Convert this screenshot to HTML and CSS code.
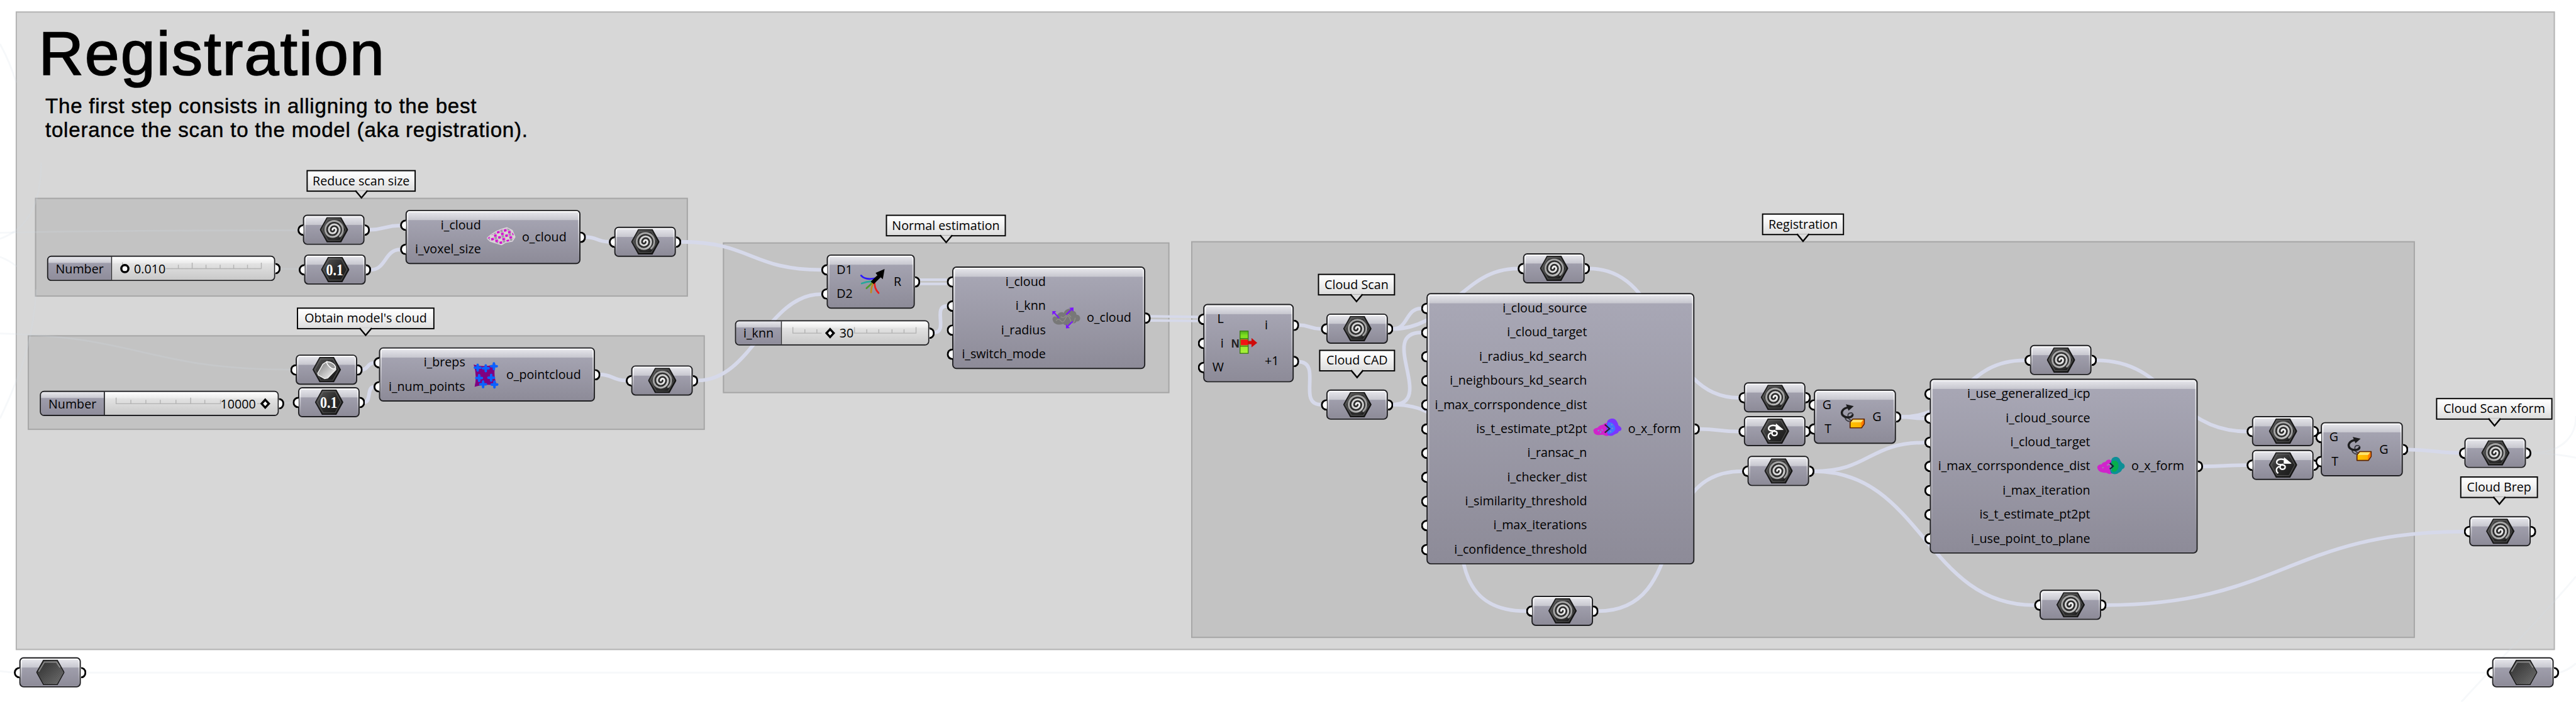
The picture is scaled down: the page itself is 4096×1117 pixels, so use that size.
FILE: index.html
```html
<!DOCTYPE html>
<html lang="en">
<head>
<meta charset="utf-8">
<title>Registration</title>
<link rel="stylesheet" href="styles.css">
</head>
<body>
<svg class="defs" aria-hidden="true">
  <defs>
    <linearGradient id="hexfill" x1="0" y1="0" x2="1" y2="1"><stop offset="0" stop-color="#5c5c5c"/><stop offset=".5" stop-color="#2c2c2c"/><stop offset="1" stop-color="#151515"/></linearGradient>
    <linearGradient id="meshfill" x1="0" y1="0" x2="1" y2="1"><stop offset="0" stop-color="#2e2e2e"/><stop offset="1" stop-color="#8a8a8a"/></linearGradient>
    <radialGradient id="spiralfill" gradientUnits="userSpaceOnUse" cx="23.5" cy="20.5" r="17"><stop offset="0" stop-color="#fff"/><stop offset=".55" stop-color="#cfcfcf"/><stop offset="1" stop-color="#8c8c8c"/></radialGradient>
    <linearGradient id="brepfill" x1="0" y1="0" x2="1" y2="1"><stop offset="0" stop-color="#777"/><stop offset="1" stop-color="#fff"/></linearGradient>
    <linearGradient id="boxfill" x1="0" y1="0" x2="1" y2="0"><stop offset="0" stop-color="#ffc400"/><stop offset=".75" stop-color="#ffb000"/><stop offset="1" stop-color="#ff6a00"/></linearGradient>
    <linearGradient id="listfill" x1="0" y1="0" x2="0" y2="1"><stop offset="0" stop-color="#4fae1c"/><stop offset=".2" stop-color="#7fe01f"/><stop offset="1" stop-color="#a8f23a"/></linearGradient>
    <pattern id="voxels" width="12" height="9" patternUnits="userSpaceOnUse" patternTransform="rotate(-14)">
      <rect width="12" height="9" fill="#d6d6d0"/><rect width="4.500" height="4" fill="#d411d0"/><rect x="6" y="4.5" width="4.500" height="4" fill="#d411d0"/><rect x="6" y="0" width="4" height="3.500" fill="#9f9ba6"/>
    </pattern>
    <pattern id="dots" width="3" height="3" patternUnits="userSpaceOnUse"><path d="M0 0h1.500v1.500H0zM1.500 1.500H3V3H1.500z" fill="#222" fill-opacity=".5"/></pattern>
  </defs>
  <symbol id="hex" viewBox="0 0 47 42">
    <path d="M12 .7H35L46.300 21 35 41.300H12L.7 21z" fill="url(#hexfill)" stroke="#111" stroke-width="1.400"/>
    <path d="M13.500 3.500H33.500L43 21 33.500 38.500H13.500L4 21z" fill="none" stroke="#777" stroke-opacity=".55" stroke-width="1.200"/>
  </symbol>
  <symbol id="spiral" viewBox="0 0 47 42">
    <use href="#hex"/>
    <circle cx="23.500" cy="20.500" r="16.500" fill="#2d2d2d"/>
    <path d="M21 21a3 3 0 0 1 6 0a6 6 0 0 1-12 0a9 9 0 0 1 18 0a12 12 0 0 1-24 0a14.700 14.700 0 0 1 29.400 0a15 15 0 0 1-5 11" fill="none" stroke="url(#spiralfill)" stroke-width="3.100" stroke-linecap="round"/>
  </symbol>
  <symbol id="brep" viewBox="0 0 47 42">
    <use href="#hex"/>
    <path d="M8.500 27L17 12 24 7.500 38 16 38.500 21 25 35 20 36 9.500 30z" fill="url(#brepfill)" stroke="#eee" stroke-width="1.500"/>
    <path d="M23 8.500C29 7 37 11 38 17C37 24 26 17 23 8.500z" fill="#9a9a9a" stroke="#fff" stroke-width="1.500"/>
  </symbol>
  <symbol id="xform" viewBox="0 0 47 42">
    <use href="#hex"/>
    <path d="M28 13C19 9.500 12.500 12 13 17.500C14 23 27 18.500 27 24C27 29.500 18.500 29.500 18.500 25C18.500 22 21 20 24 20M17.500 23.500C11.500 26 11 31 15.500 35" fill="none" stroke="#fff" stroke-width="2.500"/>
    <path d="M25.500 9L37 18.500 25 18.500z" fill="#fff" stroke="#fff"/>
  </symbol>
  <symbol id="mesh" viewBox="0 0 47 42">
    <path d="M12 .7H35L46.300 21 35 41.300H12L.7 21z" fill="url(#meshfill)" stroke="#151515" stroke-width="1.400"/>
    <path d="M12 .7H35L46.300 21 35 41.300H12L.7 21z" fill="url(#dots)"/>
    <path d="M4 20L13.500 4H33.500l6 9" fill="none" stroke="#a5a5a5" stroke-opacity=".7" stroke-width="2"/>
  </symbol>
  <symbol id="voxel" viewBox="0 0 48 48">
    <path d="M0 26L7 20 15 15 24 11 33 8.500 42 13 46.500 24 42 31 31 33 24 37 14 34 5 31z" fill="url(#voxels)" stroke="#d9d4da" stroke-width="1.500" stroke-linejoin="round"/>
  </symbol>
  <symbol id="pointcloud" viewBox="0 0 48 48">
    <path d="M4 7.500Q20 13 40 7Q36 25 42.500 42.500Q24 39 5.500 44.500Q10 26 4 7.500z" fill="#800080"/>
    <path d="M6 12.700h9.200M10.600 8v9.400M19.400 13.700h9.200M24 9v9.400M33 10.300h9.200M37.500 5.600v9.400M8.400 30h9.200M13 25.300v9.400M28.400 29.300h9.200M33 24.600v9.400M15 40.300h9.200M19.600 35.600v9.400M33.800 40.700h9.200M38.400 36v9.400" stroke="#0b62ff" stroke-width="4.200" stroke-linecap="round"/>
  </symbol>
  <symbol id="merge" viewBox="0 0 48 48">
    <g fill="none" stroke-width="2.800" stroke-linecap="round">
      <path d="M4 14Q11 22 27 18.500" stroke="#2a18ff"/><path d="M5 27Q13 24 22 23.500" stroke="#27a79b"/><path d="M13 35Q18 31 23 25" stroke="#4e9c2b"/><path d="M20.500 42Q20.500 34 24 26" stroke="#bf8a1d"/><path d="M33 43Q25 35 26.500 22" stroke="#ee1c1c"/>
    </g>
    <path d="M20 24L31 13.500 28 9.500 43 3 40 20 36.500 17 25 28z" fill="#000"/>
  </symbol>
  <symbol id="normals" viewBox="0 0 48 48">
    <path d="M2 29C-1 22 6 20 8 23C9 15 17 13 20 16C22 9 33 6 36 13C40 13 41 18 41 19C49 19 49 31 41 30C38 35 33 33 31 33C28 39 20 36 19 34C12 37 4 35 2 29z" fill="#787878"/>
    <path d="M7 29q4-5 8 0t8-4 8 3 8-4M15 22q4 4 8-1t9 2" fill="none" stroke="#a09c94" stroke-opacity=".6" stroke-width="1.600"/>
    <path d="M12 24.500L3.500 15M24 19L34 8.500M34.500 30L25.500 39" stroke="#7a14ff" stroke-width="2.200"/>
    <path d="M1 13h6.500L1 19.500zM36 7v7L29 7.500zM23.500 41.500v-7l6.500 6.500z" fill="#7a14ff"/>
  </symbol>
  <symbol id="list" viewBox="0 0 48 48">
    <rect x="17" y="4" width="13.500" height="37" fill="url(#listfill)" stroke="#3c7a17" stroke-width="1.400"/>
    <path d="M17 16.500h13.500M17 29h13.500" stroke="#3c7a17" stroke-width="1.400"/>
    <rect x="18" y="18" width="12" height="9.500" fill="#f01414"/>
    <path d="M30 20.500h6V15.500L45.500 23.500 36 31V26h-6z" fill="#cf0a0a"/>
  </symbol>
  <symbol id="ransac" viewBox="0 0 48 48">
    <path d="M1 29C-1 24 5 23 8 22C11 17 16 18 17 17C20 13 25 14 26 17V35C22 38 18 34 16 34C9 35 2 35 1 29z" fill="#d024cb"/>
    <path d="M23 14C24 6 37 4 40 13C42 15 41 18 43 19C49 22 48 28 43 28C41 33 37 32 35 34C31 37 26 36 24 34L22 25z" fill="#7a36ff"/>
    <path d="M24 14Q31 12 35 18T35 28Q29 34 24 32z" fill="#3f74ff"/>
    <path d="M8 28l2-2M14 25l2 2M12 31l1-3M30 17l2 1M31 23l2 1M28 29l2-1" stroke="#7d8cc8" stroke-width="2"/>
    <path d="M19.500 17L27.500 24 19.500 30.500" fill="none" stroke="#25222e" stroke-width="2.200"/>
  </symbol>
  <symbol id="icp" viewBox="0 0 48 48">
    <path d="M2 28C0 23 6 21 9 21C10 17 15 18 16 16C19 11 25 13 26 17V36C21 39 18 35 16 35C10 35 4 34 2 28z" fill="#d024cb"/>
    <path d="M25 15C25 7 38 6 40 15C41 17 42 18 43 19C49 21 48 28 43 29C41 34 39 34 37 35C33 39 26 37 24 35L22 27z" fill="#0d8f96"/>
    <path d="M26 16Q34 13 36 19T35 30Q30 36 26 32z" fill="#06ae4c"/>
    <path d="M18 23q3-4 6 0v7M10 27l2-1" fill="none" stroke="#9d86b0" stroke-width="2"/>
    <path d="M22.500 19L28 24 22.500 29" fill="none" stroke="#123" stroke-width="2.200"/>
  </symbol>
  <symbol id="transform" viewBox="0 0 48 48">
    <path d="M26 21C25 16 17 17 17.500 22.500C17.500 28 20 30 25 31M14 23C11 28 16 32 21 32" fill="none" stroke="#3a3a42" stroke-width="1.800"/>
    <path d="M19 8.500C8 10 5 17 9 22C14 27 26 26 25 20" fill="none" stroke="#1d1d1f" stroke-width="3.600"/>
    <path d="M14 3.500L27 6.500 18.500 14z" fill="#1d1d1f"/>
    <path d="M21 33.500L25.500 28H44.500V36L40 42.500H21z" fill="url(#boxfill)" stroke="#5e2500" stroke-width="1.800" stroke-linejoin="round"/>
    <path d="M22 33.500L26 29H43L39.500 33.500z" fill="#ffe36b"/>
    <path d="M39.500 34L43.500 29V36L39.500 41.500z" fill="#ff7a00"/>
  </symbol>
</svg>

<main class="canvas">
  <section class="group g-main"></section>
  <section class="group inner g-reduce"></section>
  <section class="group inner g-obtain"></section>
  <section class="group inner g-normal"></section>
  <section class="group inner g-reg"></section>

  <svg class="wires" viewBox="0 0 4269 1164">
    <g class="faint">
      <path d="M0 386C160 382 330 382 493 382"/>
      <path d="M0 553C230 558 250 613 481 613"/>
      <path d="M0 73Q16 102 27 137"/>
      <path d="M0 396C45 380 68 340 68 270"/>
      <path d="M0 426Q16 432 28 442"/>
      <path d="M0 694C35 620 56 560 60 480"/>
      <path d="M464 446H495M470 669L485 667"/>
      <path d="M0 1113L22 1115.500M142 1115.500H4121"/>
      <path d="M4194 751C4250 751 4269 720 4269 690M4194 751Q4235 752 4269 759"/>
      <path d="M4079 1164C4160 1075 4215 1020 4269 956M4240 1115.500Q4256 1112 4269 1100"/>
    </g>
    <g class="wire">
      <path d="M612 381C637 381 638 374 663 374"/>
      <path d="M614 447.500C640 447.500 637 414 663 414"/>
      <path d="M970 393C990 393 989 401 1009 401"/>
      <path d="M1128 401C1245 401 1244 447.500 1361 447.500"/>
      <path d="M600 613C610 613 609 602 619 602"/>
      <path d="M604 667C615 667 608 642 619 642"/>
      <path d="M994 621C1015 621 1016 631 1037 631"/>
      <path d="M1156 631C1247 631 1270 488 1361 488"/>
      <path d="M1548 551.500C1572 551.500 1545 507.500 1569 507.500"/>
      <path d="M2152 539C2170 539 2171 545.500 2189 545.500"/>
      <path d="M2152 600C2192 600 2149 671 2189 671"/>
      <path d="M2308 545.500C2334 545.500 2329 511.500 2355 511.500"/>
      <path d="M2308 545.500C2400 545.500 2423 445.500 2515 445.500"/>
      <path d="M2308 671C2380 671 2283 551.500 2355 551.500"/>
      <path d="M2308 671C2521 671 2314 1013.500 2529 1013.500"/>
      <path d="M2648 1013.500C2807 1013.500 2728 781.500 2887 781.500"/>
      <path d="M2634 445.500C2766 445.500 2749 659.500 2881 659.500"/>
      <path d="M2816 711.500C2848 711.500 2849 715.500 2881 715.500"/>
      <path d="M3150 691.500C3170 691.500 3169 694 3189 694"/>
      <path d="M3150 691.500C3252 691.500 3253 597.500 3355 597.500"/>
      <path d="M3006 781.500C3098 781.500 3097 734 3189 734"/>
      <path d="M3006 781.500C3185 781.500 3192 1003.500 3371 1003.500"/>
      <path d="M3474 597.500C3598 597.500 3599 715.500 3723 715.500"/>
      <path d="M3650 773.500C3686 773.500 3687 771.500 3723 771.500"/>
      <path d="M3990 745.500C4032 745.500 4033 751 4075 751"/>
      <path d="M3490 1003.500C3775 1003.500 3798 881.500 4083 881.500"/>
    </g>
    <g class="wire double">
      <path d="M1524 463.800H1569M1524 470.800H1569"/>
      <path d="M1906 524.500C1945 524.500 1946 525.500 1985 525.500M1906 531.500C1945 531.500 1946 532.500 1985 532.500"/>
    </g>
  </svg>

  <h1 class="title">Registration</h1>
  <p class="intro">The first step consists in alligning to the best<br>tolerance the scan to the model (aka registration).</p>

  <div class="tag t-reduce">Reduce scan size<svg viewBox="0 0 24 14"><path d="M2 0L12 12 22 0"/></svg></div>
  <div class="tag t-obtain">Obtain model's cloud<svg viewBox="0 0 24 14"><path d="M2 0L12 12 22 0"/></svg></div>
  <div class="tag t-normal">Normal estimation<svg viewBox="0 0 24 14"><path d="M2 0L12 12 22 0"/></svg></div>
  <div class="tag t-reg">Registration<svg viewBox="0 0 24 14"><path d="M2 0L12 12 22 0"/></svg></div>
  <div class="tag t-scan">Cloud Scan<svg viewBox="0 0 24 14"><path d="M2 0L12 12 22 0"/></svg></div>
  <div class="tag t-cad">Cloud CAD<svg viewBox="0 0 24 14"><path d="M2 0L12 12 22 0"/></svg></div>
  <div class="tag t-xform">Cloud Scan xform<svg viewBox="0 0 24 14"><path d="M2 0L12 12 22 0"/></svg></div>
  <div class="tag t-brep">Cloud Brep<svg viewBox="0 0 24 14"><path d="M2 0L12 12 22 0"/></svg></div>

  <div class="node param p1"><i class="grip in"></i><svg><use href="#spiral"/></svg><i class="grip out"></i></div>
  <div class="node param p2"><i class="grip in"></i><svg viewBox="0 0 47 42"><use href="#hex"/><text x="8.500" y="30.500" textLength="28.500" lengthAdjust="spacingAndGlyphs" class="hex-number">0.1</text></svg><i class="grip out"></i></div>
  <div class="node param p3"><i class="grip in"></i><svg><use href="#spiral"/></svg><i class="grip out"></i></div>
  <div class="node param p4"><i class="grip in"></i><svg><use href="#brep"/></svg><i class="grip out"></i></div>
  <div class="node param p5"><i class="grip in"></i><svg viewBox="0 0 47 42"><use href="#hex"/><text x="8.500" y="30.500" textLength="28.500" lengthAdjust="spacingAndGlyphs" class="hex-number">0.1</text></svg><i class="grip out"></i></div>
  <div class="node param p6"><i class="grip in"></i><svg><use href="#spiral"/></svg><i class="grip out"></i></div>
  <div class="node param p7"><i class="grip in"></i><svg><use href="#spiral"/></svg><i class="grip out"></i></div>
  <div class="node param p8"><i class="grip in"></i><svg><use href="#spiral"/></svg><i class="grip out"></i></div>
  <div class="node param p9"><i class="grip in"></i><svg><use href="#spiral"/></svg><i class="grip out"></i></div>
  <div class="node param p10"><i class="grip in"></i><svg><use href="#spiral"/></svg><i class="grip out"></i></div>
  <div class="node param p11"><i class="grip in"></i><svg><use href="#spiral"/></svg><i class="grip out"></i></div>
  <div class="node param p12"><i class="grip in"></i><svg><use href="#xform"/></svg><i class="grip out"></i></div>
  <div class="node param p13"><i class="grip in"></i><svg><use href="#spiral"/></svg><i class="grip out"></i></div>
  <div class="node param p14"><i class="grip in"></i><svg><use href="#spiral"/></svg><i class="grip out"></i></div>
  <div class="node param p15"><i class="grip in"></i><svg><use href="#spiral"/></svg><i class="grip out"></i></div>
  <div class="node param p16"><i class="grip in"></i><svg><use href="#spiral"/></svg><i class="grip out"></i></div>
  <div class="node param p17"><i class="grip in"></i><svg><use href="#xform"/></svg><i class="grip out"></i></div>
  <div class="node param p18"><i class="grip in"></i><svg><use href="#spiral"/></svg><i class="grip out"></i></div>
  <div class="node param p19"><i class="grip in"></i><svg><use href="#spiral"/></svg><i class="grip out"></i></div>
  <div class="node param p20"><i class="grip in"></i><svg><use href="#mesh"/></svg><i class="grip out"></i></div>
  <div class="node param p21"><i class="grip in"></i><svg><use href="#mesh"/></svg><i class="grip out"></i></div>

  <div class="slider s1">
    <span class="name">Number</span>
    <span class="track">
      <svg viewBox="0 0 269 38"><path class="scale" d="M17 9v6M89 19.500H248M110 13v6.500M133 9.500v10M156 13v6.500M179.500 13v6.500M202 13v6.500M225 13v6.500M248 9.500v10"/><circle class="knob" cx="21" cy="19.500" r="5.900"/></svg>
      <b class="value">0.010</b>
    </span>
    <i class="grip out"></i>
  </div>
  <div class="slider s2">
    <span class="name">Number</span>
    <span class="track">
      <svg viewBox="0 0 287 38"><path class="scale" d="M18.500 9.500v10H192V13M43 13v6.500M68 13v6.500M92 13v6.500M118 13v6.500M142.500 9.500v10M166 13v6.500M253 19.500h22"/><path class="knob" d="M266.500 13l6 6.500-6 6.500-6-6.500z"/></svg>
      <b class="value">10000</b>
    </span>
    <i class="grip out"></i>
  </div>
  <div class="slider s3">
    <span class="name">i_knn</span>
    <span class="track">
      <svg viewBox="0 0 243 38"><path class="scale" d="M18 9.500v10h48M38 13v6.500M58 13v6.500M120.500 9.500v10H223v-10M141 13v6.500M161 13v6.500M183 13v6.500M203 13v6.500"/><path class="knob" d="M80 13l6 6.500-6 6.500-6-6.500z"/></svg>
      <b class="value">30</b>
    </span>
    <i class="grip out"></i>
  </div>

  <div class="node comp c1">
    <ul class="inputs"><li><i class="grip in"></i>i_cloud</li><li><i class="grip in"></i>i_voxel_size</li></ul>
    <svg class="icon"><use href="#voxel"/></svg>
    <ul class="outputs"><li>o_cloud<i class="grip out"></i></li></ul>
  </div>
  <div class="node comp c2">
    <ul class="inputs"><li><i class="grip in"></i>i_breps</li><li><i class="grip in"></i>i_num_points</li></ul>
    <svg class="icon"><use href="#pointcloud"/></svg>
    <ul class="outputs"><li>o_pointcloud<i class="grip out"></i></li></ul>
  </div>
  <div class="node comp c3">
    <ul class="inputs"><li><i class="grip in"></i>D1</li><li><i class="grip in"></i>D2</li></ul>
    <svg class="icon"><use href="#merge"/></svg>
    <ul class="outputs"><li>R<i class="grip out"></i></li></ul>
  </div>
  <div class="node comp c4">
    <ul class="inputs"><li><i class="grip in"></i>i_cloud</li><li><i class="grip in"></i>i_knn</li><li><i class="grip in"></i>i_radius</li><li><i class="grip in"></i>i_switch_mode</li></ul>
    <svg class="icon"><use href="#normals"/></svg>
    <ul class="outputs"><li>o_cloud<i class="grip out"></i></li></ul>
  </div>
  <div class="node comp c5">
    <ul class="inputs"><li><i class="grip in"></i>L</li><li><i class="grip in"></i>i</li><li><i class="grip in"></i>W</li></ul>
    <svg class="icon" viewBox="0 0 48 48"><use href="#list"/><text x="2.500" y="31" textLength="13.500" lengthAdjust="spacingAndGlyphs" class="list-n">N</text></svg>
    <ul class="outputs"><li>i<i class="grip out"></i></li><li>+1<i class="grip out"></i></li></ul>
  </div>
  <div class="node comp c6">
    <ul class="inputs"><li><i class="grip in"></i>i_cloud_source</li><li><i class="grip in"></i>i_cloud_target</li><li><i class="grip in"></i>i_radius_kd_search</li><li><i class="grip in"></i>i_neighbours_kd_search</li><li><i class="grip in"></i>i_max_corrspondence_dist</li><li><i class="grip in"></i>is_t_estimate_pt2pt</li><li><i class="grip in"></i>i_ransac_n</li><li><i class="grip in"></i>i_checker_dist</li><li><i class="grip in"></i>i_similarity_threshold</li><li><i class="grip in"></i>i_max_iterations</li><li><i class="grip in"></i>i_confidence_threshold</li></ul>
    <svg class="icon"><use href="#ransac"/></svg>
    <ul class="outputs"><li>o_x_form<i class="grip out"></i></li></ul>
  </div>
  <div class="node comp c7">
    <ul class="inputs"><li><i class="grip in"></i>G</li><li><i class="grip in"></i>T</li></ul>
    <svg class="icon"><use href="#transform"/></svg>
    <ul class="outputs"><li>G<i class="grip out"></i></li></ul>
  </div>
  <div class="node comp c8">
    <ul class="inputs"><li><i class="grip in"></i>i_use_generalized_icp</li><li><i class="grip in"></i>i_cloud_source</li><li><i class="grip in"></i>i_cloud_target</li><li><i class="grip in"></i>i_max_corrspondence_dist</li><li><i class="grip in"></i>i_max_iteration</li><li><i class="grip in"></i>is_t_estimate_pt2pt</li><li><i class="grip in"></i>i_use_point_to_plane</li></ul>
    <svg class="icon"><use href="#icp"/></svg>
    <ul class="outputs"><li>o_x_form<i class="grip out"></i></li></ul>
  </div>
  <div class="node comp c9">
    <ul class="inputs"><li><i class="grip in"></i>G</li><li><i class="grip in"></i>T</li></ul>
    <svg class="icon"><use href="#transform"/></svg>
    <ul class="outputs"><li>G<i class="grip out"></i></li></ul>
  </div>
</main>
</body>
</html>
```
FILE: styles.css
```css
* { box-sizing: border-box; }
html, body { margin: 0; width: 4096px; height: 1117px; overflow: hidden; background: #fff; }
.defs { position: absolute; width: 0; height: 0; }

.canvas {
  position: relative;
  width: 4269px;
  height: 1164px;
  overflow: hidden;
  transform: scale(.95948);
  transform-origin: 0 0;
  font: 20.5px/40px "Open Sans", "Noto Sans", sans-serif;
  color: #000;
}
.canvas > * { position: absolute; }

/* Groups */
.group { background: #d7d7d7; border: 2px solid #b3b3b3; }
.group.inner { background: #c3c3c3; border-color: #a6a6a6; }
.g-main { left: 26px; top: 19px; width: 4208px; height: 1059px; }
.g-reduce { left: 58px; top: 328px; width: 1082px; height: 164px; }
.g-obtain { left: 46px; top: 556px; width: 1122px; height: 157px; }
.g-normal { left: 1198px; top: 402px; width: 740px; height: 250px; }
.g-reg { left: 1974px; top: 400px; width: 2028px; height: 658px; }

/* Wires */
.wires { left: 0; top: 0; width: 4269px; height: 1164px; fill: none; }
.wire { stroke: #d6d9ea; stroke-width: 6; }
.wire.double { stroke-width: 4; }
.faint { stroke: #d2dae4; stroke-opacity: .2; stroke-width: 3; }

/* Headings */
.title, .intro { margin: 0; font-family: "Liberation Sans", Arial, sans-serif; font-weight: 400; white-space: nowrap; }
.title { left: 64px; top: 31px; font-size: 103px; line-height: 116px; letter-spacing: 2.100px; -webkit-text-stroke: 1.800px #000; }
.intro { left: 75px; top: 157px; font-size: 34.500px; line-height: 38.700px; letter-spacing: .8px; -webkit-text-stroke: .5px #000; }

/* Tags */
.tag {
  height: 36px;
  border: 2.500px solid #000;
  background: linear-gradient(#fff, #f4f4f4 40%, #dcdcdc);
  display: flex;
  justify-content: center;
  line-height: 31px;
  white-space: nowrap;
}
.tag svg { position: absolute; left: calc(50% - 12px); top: calc(100% - .5px); width: 24px; height: 14px; overflow: visible; fill: #dcdcdc; stroke: #000; stroke-width: 2.500; }
.t-reduce { left: 508px; top: 282px; width: 181px; }
.t-obtain { left: 492px; top: 510px; width: 228px; }
.t-normal { left: 1468px; top: 356px; width: 199px; }
.t-reg { left: 2920px; top: 354px; width: 136px; }
.t-scan { left: 2184px; top: 454px; width: 128px; }
.t-cad { left: 2186px; top: 580px; width: 126px; }
.t-xform { left: 4037px; top: 660px; width: 193px; }
.t-brep { left: 4077px; top: 790px; width: 129px; }

/* Nodes */
.node {
  border: 2px solid #1f1f22;
  border-radius: 7px;
  background:
    linear-gradient(rgba(255,255,255,.8), rgba(255,255,255,0) 90%) left / 2.500px 100% no-repeat,
    linear-gradient(rgba(255,255,255,.8), rgba(255,255,255,0) 90%) right / 2.500px 100% no-repeat,
    linear-gradient(#fff, #fff) top / 100% 2px no-repeat,
    linear-gradient(#e8e8ed, #c7c7cf) top / 100% 15px no-repeat,
    linear-gradient(#a9a8b6, #8d8b98);
}
.grip { position: absolute; top: calc(50% - 9.500px); width: 9.500px; height: 19px; border: 3.500px solid #000; background: #fff; }
.grip.in { left: -11px; border-right: 0; border-radius: 9.500px 0 0 9.500px; }
.grip.out { right: -11px; border-left: 0; border-radius: 0 9.500px 9.500px 0; }

.param { width: 102px; height: 50px; display: flex; align-items: center; justify-content: center; }
.param svg { width: 47px; height: 42px; }
.hex-number { font: bold 27px "Liberation Serif", serif; fill: #fff; }
.list-n { font: bold 20px "Liberation Sans", sans-serif; fill: #222; }
.p1 { left: 502px; top: 356px; }
.p2 { left: 504px; top: 422px; }
.p3 { left: 1018px; top: 376px; }
.p4 { left: 490px; top: 588px; }
.p5 { left: 494px; top: 642px; }
.p6 { left: 1046px; top: 606px; }
.p7 { left: 2198px; top: 520px; }
.p8 { left: 2198px; top: 646px; }
.p9 { left: 2524px; top: 420px; }
.p10 { left: 2538px; top: 988px; }
.p11 { left: 2890px; top: 634px; }
.p12 { left: 2890px; top: 690px; }
.p13 { left: 2896px; top: 756px; }
.p14 { left: 3364px; top: 572px; }
.p15 { left: 3380px; top: 978px; }
.p16 { left: 3732px; top: 690px; }
.p17 { left: 3732px; top: 746px; }
.p18 { left: 4084px; top: 726px; }
.p19 { left: 4092px; top: 856px; }
.p20 { left: 4130px; top: 1090px; }
.p21 { left: 32px; top: 1090px; }

.comp { display: flex; align-items: center; gap: 10px; padding: 3px 0; }
.comp ul { list-style: none; margin: 0; padding: 0; align-self: stretch; display: flex; flex-direction: column; }
.comp li { position: relative; flex: 1 1 0; min-height: 0; display: flex; align-items: center; white-space: nowrap; line-height: 36px; padding-bottom: 2px; }
.inputs { flex: 1; }
.inputs li { justify-content: flex-end; }
.icon { width: 48px; height: 48px; flex: none; }
.c1 { left: 672px; top: 348px; width: 290px; height: 90px; }
.c2 { left: 628px; top: 576px; width: 358px; height: 90px; }
.c3 { left: 1370px; top: 422px; width: 146px; height: 90px; }
.c4 { left: 1578px; top: 442px; width: 320px; height: 170px; }
.c5 { left: 1994px; top: 504px; width: 150px; height: 130px; }
.c6 { left: 2364px; top: 486px; width: 444px; height: 450px; }
.c7 { left: 3006px; top: 646px; width: 136px; height: 90px; }
.c8 { left: 3198px; top: 628px; width: 444px; height: 290px; }
.c9 { left: 3846px; top: 700px; width: 136px; height: 90px; }
.c1 .outputs, .c4 .outputs { width: 95px; }
.c2 .outputs { width: 145px; }
.c3 .outputs { width: 33px; }
.c5 .outputs { width: 46px; }
.c6 .outputs, .c8 .outputs { width: 108px; }
.c7 .outputs, .c9 .outputs { width: 37px; }

/* Sliders */
.slider { height: 42px; display: flex; border: 2px solid #1f1f22; border-radius: 7px; line-height: 38px; }
.name {
  flex: none;
  text-align: center;
  border-right: 2px solid #2b2b2e;
  border-radius: 5px 0 0 5px;
  background: linear-gradient(#e8e8ed, #c7c7cf) top / 100% 10px no-repeat, linear-gradient(#a3a2b1, #8f8d9b);
}
.track { position: relative; flex: 1; border-radius: 0 5px 5px 0; background: linear-gradient(#fff, #ececec 26%, #e2e2e2 30%, #c9c9c9); }
.track svg { position: absolute; left: 0; top: 0; width: 100%; height: 38px; fill: none; }
.scale { stroke: #b3b3b3; stroke-width: 1.500; }
.knob { fill: #fff; stroke: #000; stroke-width: 3.600; }
.value { position: absolute; top: 0; font-weight: 400; }
.s1 { left: 78px; top: 424px; width: 378px; }
.s2 { left: 66px; top: 648px; width: 396px; }
.s3 { left: 1218px; top: 531px; width: 322px; }
.s1 .name, .s2 .name { width: 106px; }
.s3 .name { width: 76px; }
.s1 .value { left: 36px; }
.s2 .value { right: 36px; }
.s3 .value { left: 95px; }
```
